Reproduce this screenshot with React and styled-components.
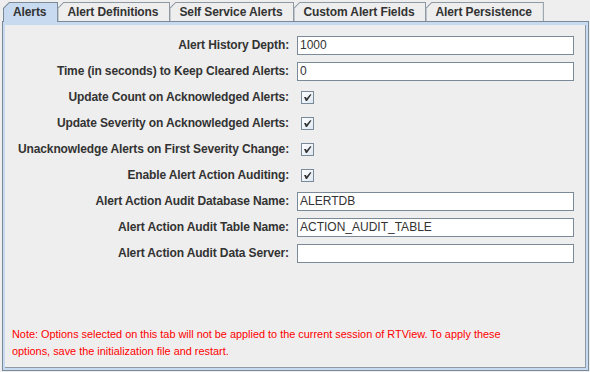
import React from 'react';
import styled, { createGlobalStyle } from 'styled-components';

const GlobalStyle = createGlobalStyle`
	html, body {
		margin: 0;
		padding: 0;
		background: #eeeeee;
	}
	body {
		font-family: "Liberation Sans", Arial, sans-serif;
		color: #333333;
	}
`;

const Window = styled.div`
	display: flex;
	flex-direction: column;
	width: 590px;
	height: 372px;
	box-sizing: border-box;
	padding: 2px 1px 1px 2px;
`;

const TabStrip = styled.div`
	display: flex;
	align-items: flex-start;
	margin: 0 0 -1px 1px;
	height: 20px;
	position: relative;
	z-index: 1;
`;

const Tab = styled.div`
	box-sizing: border-box;
	height: ${(p) => (p.$active ? '20px' : '19px')};
	padding: 1px 1px 0 1px;
	margin-left: ${(p) => (p.$first ? '0' : '-1px')};
	background: ${(p) => (p.$active ? '#7a8a99' : '#8e99a4')};
	clip-path: polygon(6px 0, 100% 0, 100% 100%, 0 100%, 0 6px);
`;

const TabFace = styled.div`
	height: 100%;
	box-sizing: border-box;
	padding: 0 11px 0 9px;
	background: ${(p) => (p.$active ? '#c8daef' : '#eeeeee')};
	clip-path: polygon(5.4px 0, 100% 0, 100% 100%, 0 100%, 0 5.4px);
	font-size: 12px;
	font-weight: bold;
	letter-spacing: -0.1px;
	line-height: 18px;
	color: #333333;
	white-space: nowrap;
`;

const Panel = styled.div`
	flex: 1;
	display: flex;
	flex-direction: column;
	border: 1px solid #7a8a99;
`;

const PanelBody = styled.div`
	flex: 1;
	display: flex;
	flex-direction: column;
	border-style: solid;
	border-color: #c8daef;
	border-width: 3px 2px 2px 2px;
	box-shadow: inset -1px -1px 0 #8e99a4;
`;

const Form = styled.div`
	display: grid;
	grid-template-columns: 1fr 277px;
	grid-auto-rows: 26px;
	column-gap: 8px;
	align-items: center;
	padding: 7px 12px 0 8px;
`;

const Label = styled.div`
	justify-self: end;
	font-size: 12px;
	font-weight: bold;
	letter-spacing: -0.13px;
	color: #333333;
	white-space: nowrap;
`;

const TextField = styled.div`
	box-sizing: border-box;
	height: 19px;
	border: 1px solid #7a8a99;
	background: #ffffff;
	padding-left: 2px;
	font-size: 12px;
	line-height: 17px;
	color: #333333;
	white-space: nowrap;
	overflow: hidden;
`;

const CheckBox = styled.div`
	justify-self: start;
	box-sizing: border-box;
	width: 13px;
	height: 13px;
	margin-left: 4px;
	border: 1px solid #7a8a99;
	background: linear-gradient(135deg, #ffffff 0%, #dde8f3 100%);
	display: flex;
	align-items: center;
	justify-content: center;
`;

const Note = styled.div`
	margin-top: auto;
	padding: 0 8px 8px 7px;
	font-size: 10.9px;
	line-height: 17px;
	color: #ff0000;
	white-space: nowrap;
`;

const Check = () => (
	<svg width="9" height="9" viewBox="0 0 9 9">
		<path d="M1 4 L3 4 L3.6 5.6 L7.2 1.2 L8.2 1.2 L8.2 2 L4 8 L2.8 8 Z" fill="#333333" />
	</svg>
);

const tabs = [
	'Alerts',
	'Alert Definitions',
	'Self Service Alerts',
	'Custom Alert Fields',
	'Alert Persistence',
];

const rows = [
	{ label: 'Alert History Depth:', text: '1000' },
	{ label: 'Time (in seconds) to Keep Cleared Alerts:', text: '0' },
	{ label: 'Update Count on Acknowledged Alerts:', check: true },
	{ label: 'Update Severity on Acknowledged Alerts:', check: true },
	{ label: 'Unacknowledge Alerts on First Severity Change:', check: true },
	{ label: 'Enable Alert Action Auditing:', check: true },
	{ label: 'Alert Action Audit Database Name:', text: 'ALERTDB' },
	{ label: 'Alert Action Audit Table Name:', text: 'ACTION_AUDIT_TABLE' },
	{ label: 'Alert Action Audit Data Server:', text: '' },
];

export default function App() {
	return (
		<>
			<GlobalStyle />
			<Window>
				<TabStrip>
					{tabs.map((t, i) => (
						<Tab key={t} $active={i === 0} $first={i === 0}>
							<TabFace $active={i === 0}>{t}</TabFace>
						</Tab>
					))}
				</TabStrip>
				<Panel>
					<PanelBody>
						<Form>
							{rows.map((r) => (
								<React.Fragment key={r.label}>
									<Label>{r.label}</Label>
									{r.check ? (
										<CheckBox>
											<Check />
										</CheckBox>
									) : (
										<TextField>{r.text}</TextField>
									)}
								</React.Fragment>
							))}
						</Form>
						<Note>
							Note: Options selected on this tab will not be applied to the current session of RTView. To apply these
							<br />
							options, save the initialization file and restart.
						</Note>
					</PanelBody>
				</Panel>
			</Window>
		</>
	);
}
